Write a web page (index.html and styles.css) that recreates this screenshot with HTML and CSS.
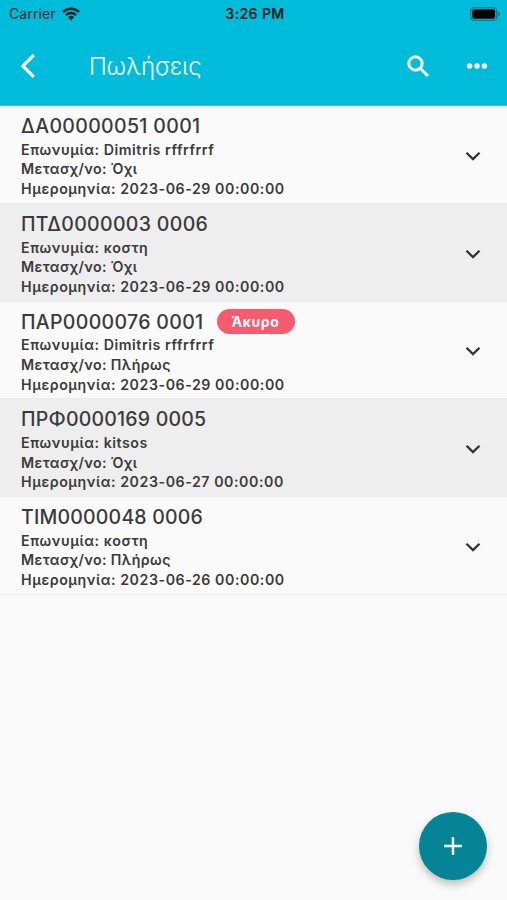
FILE: index.html
```
<!DOCTYPE html>
<html lang="el">
<head>
  <meta charset="UTF-8">
  <meta name="viewport" content="width=device-width, initial-scale=1.0">
  <title>Πωλήσεις</title>
  <link rel="stylesheet" href="styles.css">
</head>
<body>

  <header class="header">
    <div class="status-bar">
      <div class="carrier">
        <span>Carrier</span>
        <svg class="wifi" width="18" height="14" viewBox="0 0 18 14" fill="none" stroke="#06262b" stroke-width="2.5">
          <path d="M1 5a11.4 11.4 0 0 1 16 0"/>
          <path d="M3.9 8.2a7.3 7.3 0 0 1 10.2 0"/>
          <path d="M9 13.4L5.9 10.3a4.5 4.5 0 0 1 6.2 0z" fill="#06262b" stroke="none"/>
        </svg>
      </div>
      <div class="clock">3:26 PM</div>
      <svg class="battery" width="31" height="14" viewBox="0 0 31 14">
        <rect x="0.7" y="0.7" width="26" height="12.6" rx="3.6" fill="none" stroke="#06788a" stroke-width="1.3"/>
        <rect x="2.3" y="2.3" width="22.8" height="9.4" rx="2" fill="#000"/>
        <path d="M28 4.8c2.4.8 2.4 3.6 0 4.4z" fill="#06788a"/>
      </svg>
    </div>
    <div class="toolbar">
      <svg class="back" width="16" height="26" viewBox="0 0 16 26" fill="none" stroke="#fff" stroke-width="3.2">
        <path d="M14.8 2L3.8 13l11 11"/>
      </svg>
      <h1 class="page-title">Πωλήσεις</h1>
      <svg class="search" width="29" height="29" viewBox="0 0 24 24" fill="#fff" stroke="#fff" stroke-width="0.5">
        <path d="M15.5 14h-.79l-.28-.27A6.47 6.47 0 0 0 16 9.5 6.5 6.5 0 1 0 9.5 16c1.61 0 3.09-.59 4.23-1.57l.27.28v.79l5 4.99L20.49 19l-4.99-5zm-6 0C7.01 14 5 11.99 5 9.5S7.01 5 9.5 5 14 7.01 14 9.5 11.99 14 9.5 14z"/>
      </svg>
      <svg class="more" width="22" height="6" viewBox="0 0 22 6" fill="#fff">
        <circle cx="3.6" cy="3" r="2.7"/>
        <circle cx="11" cy="3" r="2.7"/>
        <circle cx="18.4" cy="3" r="2.7"/>
      </svg>
    </div>
  </header>

  <main class="sales-list">
    <div class="sale">
      <div class="sale-info">
        <h2 class="code">ΔΑ00000051 0001</h2>
        <p class="name">Επωνυμία: Dimitris rffrfrrf</p>
        <p class="status">Μετασχ/νο: Όχι</p>
        <p class="date">Ημερομηνία: 2023-06-29 00:00:00</p>
      </div>
      <svg class="chevron" width="16" height="10" viewBox="0 0 16 10"><path d="M1.5 1.7L8 8.1l6.5-6.4"/></svg>
    </div>
    <div class="sale">
      <div class="sale-info">
        <h2 class="code">ΠΤΔ0000003 0006</h2>
        <p class="name">Επωνυμία: κοστη</p>
        <p class="status">Μετασχ/νο: Όχι</p>
        <p class="date">Ημερομηνία: 2023-06-29 00:00:00</p>
      </div>
      <svg class="chevron" width="16" height="10" viewBox="0 0 16 10"><path d="M1.5 1.7L8 8.1l6.5-6.4"/></svg>
    </div>
    <div class="sale">
      <div class="sale-info">
        <div class="code-row">
          <h2 class="code">ΠΑΡ0000076 0001</h2>
          <span class="badge">Άκυρο</span>
        </div>
        <p class="name">Επωνυμία: Dimitris rffrfrrf</p>
        <p class="status">Μετασχ/νο: Πλήρως</p>
        <p class="date">Ημερομηνία: 2023-06-29 00:00:00</p>
      </div>
      <svg class="chevron" width="16" height="10" viewBox="0 0 16 10"><path d="M1.5 1.7L8 8.1l6.5-6.4"/></svg>
    </div>
    <div class="sale">
      <div class="sale-info">
        <h2 class="code code-tight">ΠΡΦ0000169 0005</h2>
        <p class="name">Επωνυμία: kitsos</p>
        <p class="status">Μετασχ/νο: Όχι</p>
        <p class="date">Ημερομηνία: 2023-06-27 00:00:00</p>
      </div>
      <svg class="chevron" width="16" height="10" viewBox="0 0 16 10"><path d="M1.5 1.7L8 8.1l6.5-6.4"/></svg>
    </div>
    <div class="sale">
      <div class="sale-info">
        <h2 class="code code-tight">ΤΙΜ0000048 0006</h2>
        <p class="name">Επωνυμία: κοστη</p>
        <p class="status">Μετασχ/νο: Πλήρως</p>
        <p class="date">Ημερομηνία: 2023-06-26 00:00:00</p>
      </div>
      <svg class="chevron" width="16" height="10" viewBox="0 0 16 10"><path d="M1.5 1.7L8 8.1l6.5-6.4"/></svg>
    </div>
  </main>

  <!-- Add new sale -->
  <button class="fab" aria-label="Προσθήκη">
    <svg width="18" height="18" viewBox="0 0 18 18" stroke="#fff" stroke-width="2.4"><path d="M9 0v18M0 9h18"/></svg>
  </button>

</body>
</html>
```
FILE: styles.css
```
* {
  box-sizing: border-box;
}
body {
  margin: 0;
  height: 900px;
  overflow: hidden;
  background: #fafafa;
  color: #3b3b3b;
  font-family: Inter, "Noto Sans", sans-serif;
}
h1, h2, p {
  margin: 0;
}
.header {
  height: 106px;
  background: #00bcda;
  border-bottom: 1px solid #35c8df;
}
.status-bar {
  display: grid;
  grid-template-columns: 1fr auto 1fr;
  align-items: center;
  height: 27px;
  padding: 0 6px 0 9px;
  color: #06262b;
  font-size: 14px;
}
.carrier {
  display: flex;
  align-items: center;
  gap: 6px;
  letter-spacing: 0.1px;
}
.clock {
  font-weight: 600;
  letter-spacing: 0.4px;
  color: #041d21;
}
.battery {
  justify-self: end;
}
.toolbar {
  display: flex;
  align-items: center;
  height: 78px;
  padding: 0 19px 0 19px;
}
.page-title {
  flex: 1;
  margin-left: 54px;
  color: #fff;
  font-size: 24px;
  font-weight: 300;
  letter-spacing: -0.15px;
}
.more {
  margin-left: 33px;
}
.sale {
  display: flex;
  align-items: center;
  justify-content: space-between;
  height: 97.75px;
  padding: 3px 26px 0 21px;
  border-bottom: 1px solid #ececec;
}
.sale:nth-child(even) {
  background: #eee;
}
.code {
  font-size: 19.5px;
  font-weight: 500;
  line-height: 26px;
  letter-spacing: 0.33px;
  white-space: nowrap;
}
.code-tight {
  letter-spacing: 0.2px;
}
.code-row {
  display: flex;
  align-items: center;
  gap: 13px;
  height: 26px;
}
.name, .status, .date {
  font-size: 14.2px;
  font-weight: 600;
  line-height: 19.6px;
  letter-spacing: 0.55px;
  white-space: nowrap;
}
.name {
  margin-top: 0.7px;
}
.status {
  letter-spacing: 0.4px;
}
.badge {
  width: 78px;
  height: 25px;
  border-radius: 13px;
  background: #f65c6e;
  color: #fff;
  font-size: 14px;
  font-weight: 700;
  line-height: 26px;
  letter-spacing: 0.6px;
  text-align: center;
}
.chevron {
  fill: none;
  stroke: #333;
  stroke-width: 2.3;
}
.fab {
  position: absolute;
  right: 20px;
  bottom: 20px;
  display: flex;
  align-items: center;
  justify-content: center;
  width: 68px;
  height: 68px;
  padding: 0;
  border: none;
  border-radius: 50%;
  background: #048494;
  box-shadow: 0 4px 8px rgba(0, 0, 0, 0.25);
}
```
